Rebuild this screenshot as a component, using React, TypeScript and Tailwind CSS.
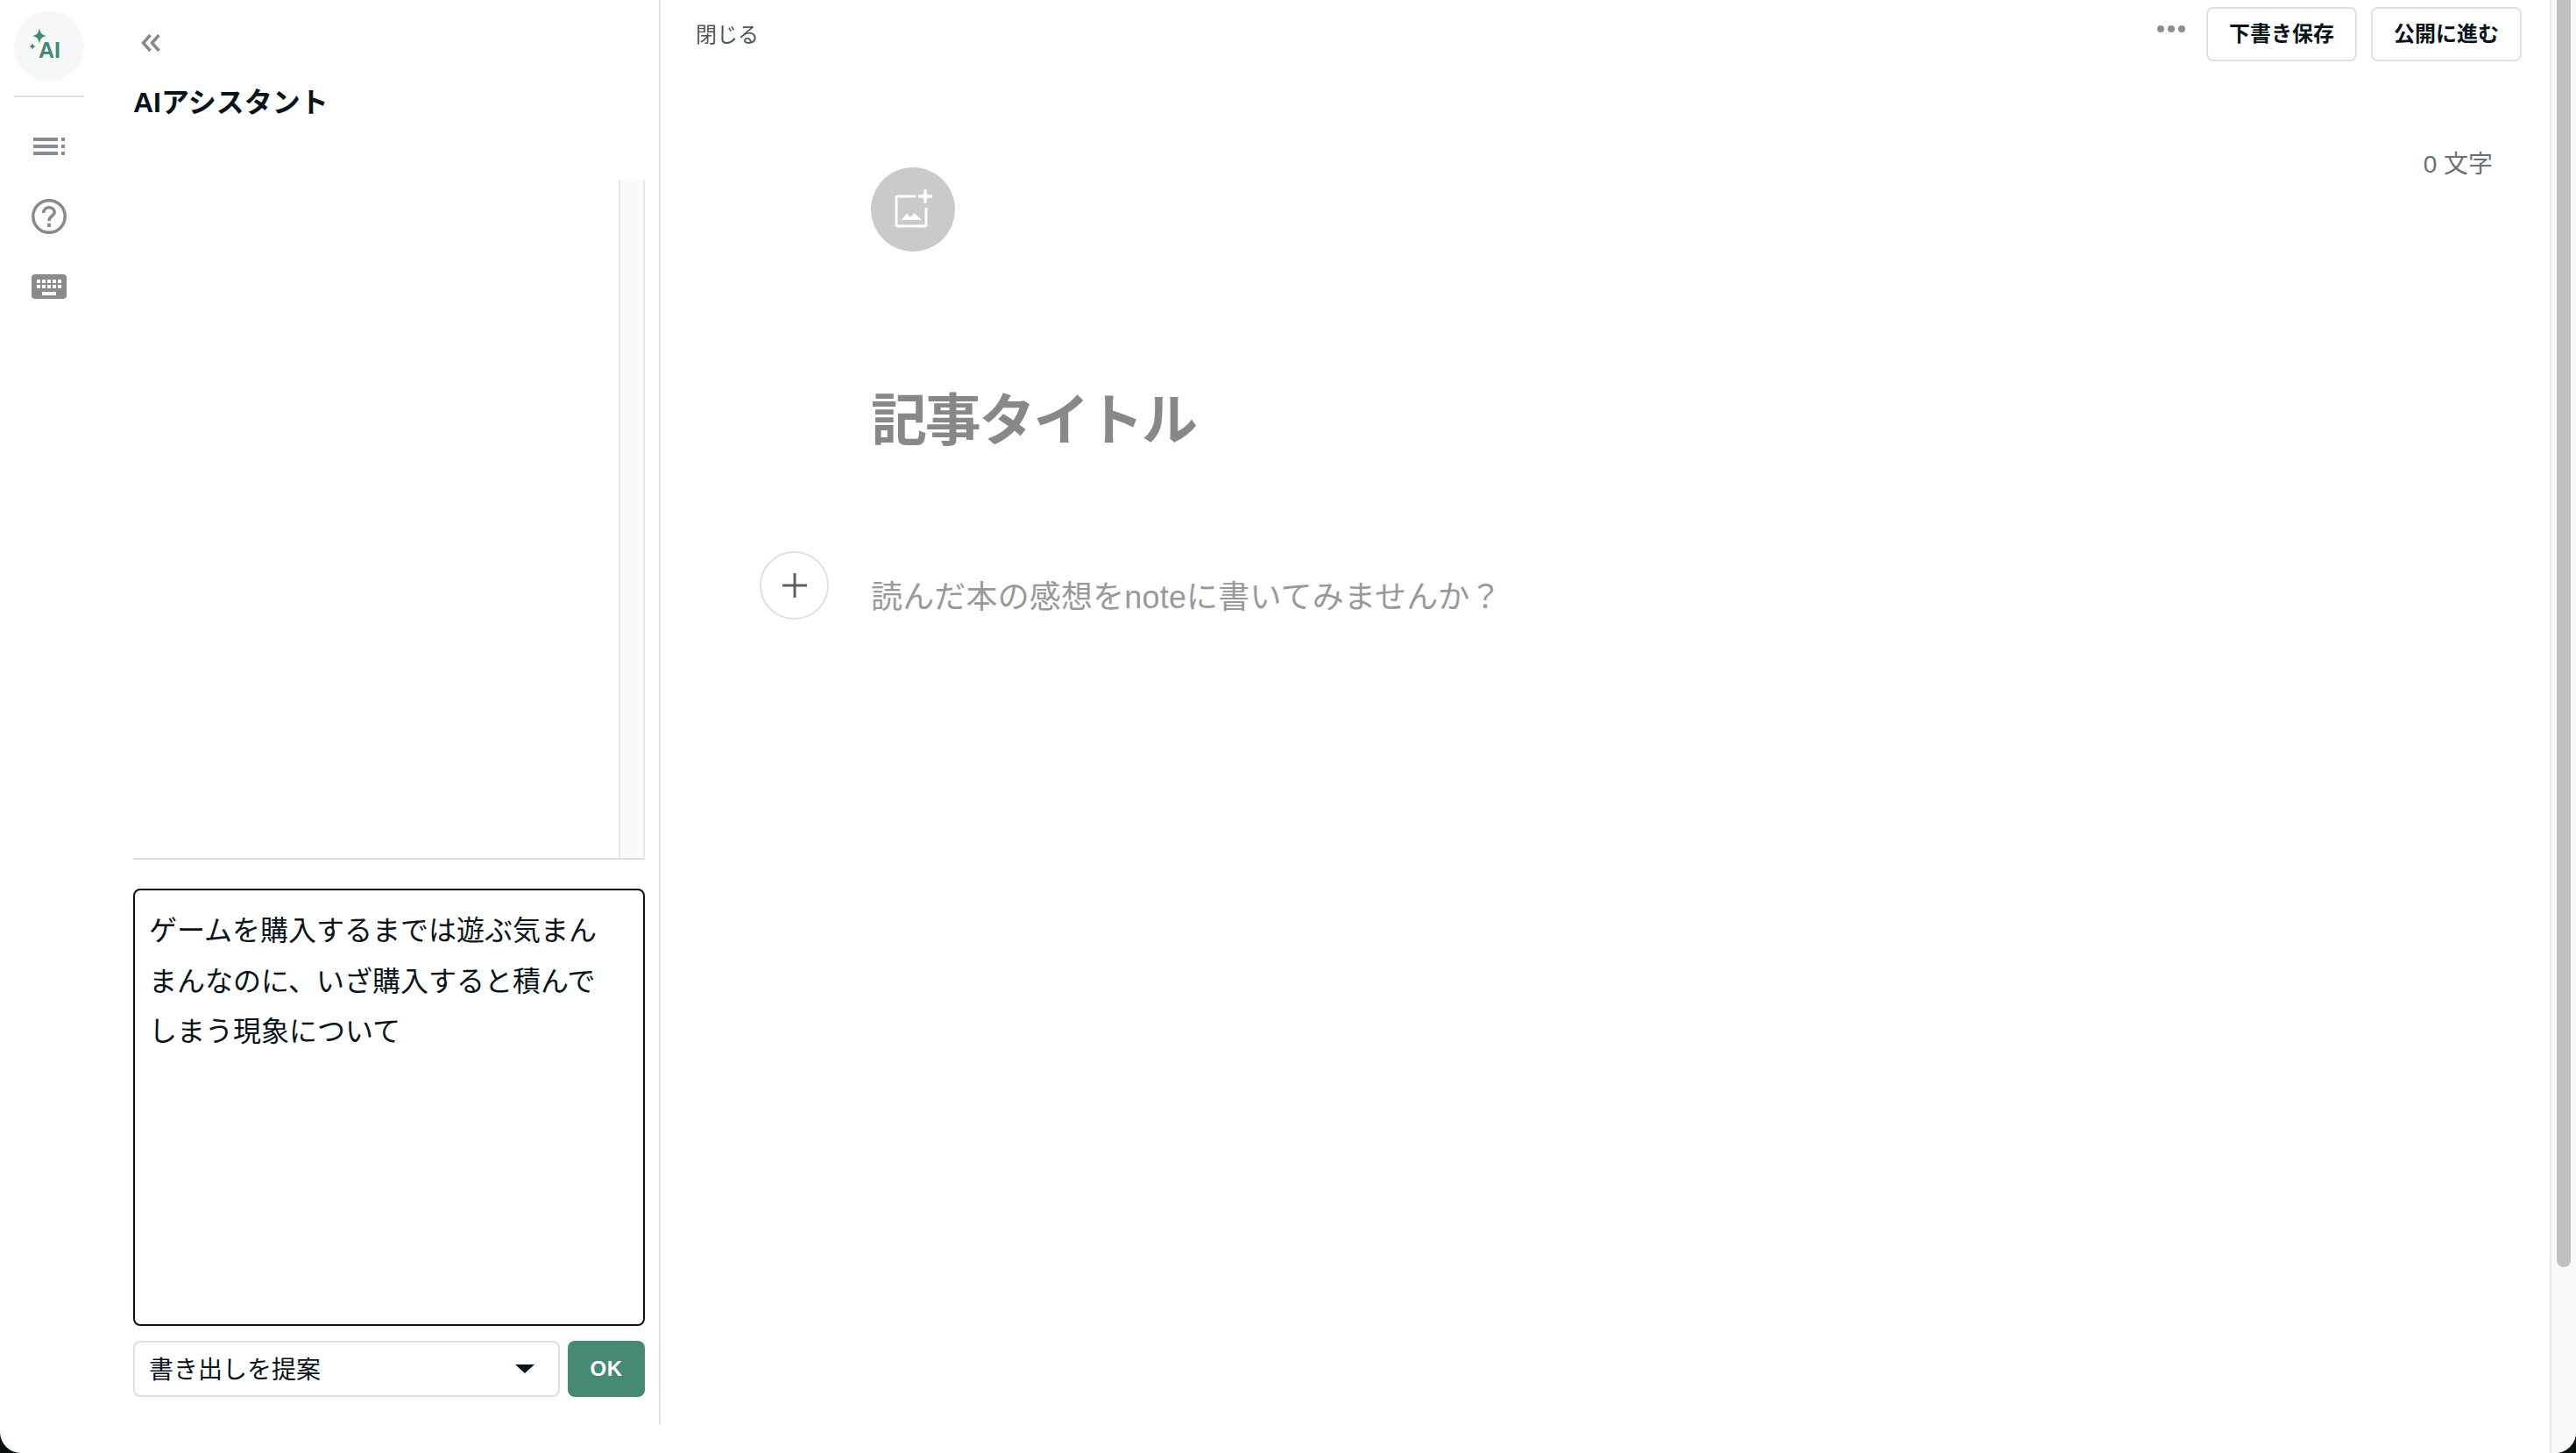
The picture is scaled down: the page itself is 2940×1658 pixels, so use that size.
const font = '[font-family:"Liberation_Sans","Noto_Sans_CJK_JP",sans-serif]';

function Stars() {
  return (
    <svg width="80" height="80" viewBox="0 0 80 80" className="absolute left-0 top-0">
      <path d="M29 19 C30 25 32 27 37 28 C32 29 30 31 29 37 C28 31 26 29 21 28 C26 27 28 25 29 19Z" fill="#3f8a70" />
      <path d="M21 36 C21.500 38.500 22.500 39.500 25 40 C22.500 40.500 21.500 41.500 21 44 C20.500 41.500 19.500 40.500 17 40 C19.500 39.500 20.500 38.500 21 36Z" fill="#3f8a70" />
    </svg>
  );
}

function ListIcon() {
  return (
    <svg width="36" height="20" viewBox="0 0 36 20" fill="#888b8e">
      <rect x="0" y="0" width="28" height="4" />
      <rect x="0" y="8" width="28" height="4" />
      <rect x="0" y="16" width="28" height="4" />
      <rect x="32" y="0" width="4" height="4" />
      <rect x="32" y="8" width="4" height="4" />
      <rect x="32" y="16" width="4" height="4" />
    </svg>
  );
}

function HelpIcon() {
  return (
    <svg width="40" height="40" viewBox="0 0 40 40" fill="none" stroke="#888b8e">
      <circle cx="20" cy="20" r="18.250" strokeWidth="3.500" />
      <path d="M13.800 16 C13.800 12 16.500 9.800 20 9.800 C23.500 9.800 26.200 12 26.200 15.200 C26.200 19.500 20 19.500 20 25" strokeWidth="3.600" />
      <rect x="18" y="28" width="4" height="4" fill="#888b8e" stroke="none" />
    </svg>
  );
}

function KeyboardIcon() {
  const keys = [0, 1, 2, 3, 4];
  return (
    <svg width="40" height="28" viewBox="0 0 40 28">
      <rect width="40" height="28" rx="4" fill="#888b8e" />
      {keys.map((k) => (
        <rect key={`a${k}`} x={6 + k * 6} y="6" width="4" height="4" fill="#fff" />
      ))}
      {keys.map((k) => (
        <rect key={`b${k}`} x={6 + k * 6} y="12" width="4" height="4" fill="#fff" />
      ))}
      <rect x="12" y="20" width="16" height="4" fill="#fff" />
    </svg>
  );
}

function ChevronsIcon() {
  return (
    <svg width="22" height="20" viewBox="0 0 22 20" fill="none" stroke="#85888c" strokeWidth="3.500">
      <path d="M10.500 1 L2.500 10 L10.500 19" />
      <path d="M20.500 1 L12.500 10 L20.500 19" />
    </svg>
  );
}

function AddImageIcon() {
  return (
    <svg width="96" height="96" viewBox="0 0 96 96" fill="none" stroke="#fff" strokeWidth="3">
      <path d="M51 33 H30.500 A1.500 1.500 0 0 0 29 34.500 V65.500 A1.500 1.500 0 0 0 30.500 67 H61.500 A1.500 1.500 0 0 0 63 65.500 V46" />
      <path d="M62 25 V41 M54 33 H70" strokeWidth="3.400" />
      <path d="M35 60 L41 52.500 L45 57 L49.500 52 L58 60 Z" fill="#fff" stroke="none" />
    </svg>
  );
}

function Rail() {
  return (
    <div className="flex w-[112px] shrink-0 flex-col items-center pt-[13px]">
      <div className="relative h-20 w-20 rounded-full bg-[#f5f7f8]">
        <Stars />
        <span className="absolute left-[28px] top-[27px] text-[25px] leading-[34px] font-bold text-[#3f8a70]">AI</span>
      </div>
      <div className="mt-[16px] h-[2px] w-20 bg-[#e0e0e0]" />
      <div className="mt-[46px]"><ListIcon /></div>
      <div className="mt-[50px]"><HelpIcon /></div>
      <div className="mt-[46px]"><KeyboardIcon /></div>
    </div>
  );
}

function Assistant() {
  return (
    <aside className="flex h-[1625px] w-[642px] shrink-0 flex-col border-r-2 border-[#e0e0e0] pl-[40px] pr-[16px]">
      <div className="ml-[9px] mt-[39px] h-5"><ChevronsIcon /></div>
      <h2 className="mt-[38px] text-[32px] leading-[40px] font-bold text-[#08131a]">AIアシスタント</h2>
      <div className="mt-[68px] flex h-[776px] justify-end border-b-2 border-[#e0e0e0]">
        <div className="w-[30px] border-x-2 border-[#e8e8e8] bg-[#fafafa]" />
      </div>
      <div className="mt-[33px] h-[499px] rounded-lg border-2 border-[#08131a] px-[16px] pt-[18px] text-[32px] leading-[57.600px] text-[#08131a]">
        <div>ゲームを購入するまでは遊ぶ気まん</div>
        <div>まんなのに、いざ購入すると積んで</div>
        <div>しまう現象について</div>
      </div>
      <div className="mt-[17px] flex h-16 gap-[9px]">
        <div className="flex flex-1 items-center justify-between rounded-lg border-2 border-[#e0e0e0] pl-[16px] pr-[27px] text-[28px] text-[#08131a]">
          <span className="mt-[3px]">書き出しを提案</span>
          <svg width="22" height="10" viewBox="0 0 22 10"><path d="M0 0 H22 L11 10 Z" fill="#08131a" /></svg>
        </div>
        <button className="flex w-[88px] items-center justify-center rounded-lg bg-[#478a74] text-[24px] font-bold tracking-wide text-white">OK</button>
      </div>
    </aside>
  );
}

function Editor() {
  return (
    <main className="flex min-w-0 flex-1 flex-col">
      <header className="flex h-[78px] shrink-0 items-start justify-between pl-[40px] pr-[32px] pt-2">
        <button className="mt-[14px] text-[24px] leading-[36px] text-[#4f5659]">閉じる</button>
        <div className="flex items-start">
          <div className="mr-[24px] mt-[21px] flex gap-[4px]">
            <span className="h-2 w-2 rounded-full bg-[#8b9093]" />
            <span className="h-2 w-2 rounded-full bg-[#8b9093]" />
            <span className="h-2 w-2 rounded-full bg-[#8b9093]" />
          </div>
          <button className="h-[62px] w-[172px] rounded-lg border-2 border-[#e0e0e0] text-[24px] font-bold text-[#08131a]">下書き保存</button>
          <button className="ml-[16px] h-[62px] w-[172px] rounded-lg border-2 border-[#e0e0e0] text-[24px] font-bold text-[#08131a]">公開に進む</button>
        </div>
      </header>
      <div className="mt-[90px] flex items-start justify-between pl-[240px] pr-[65px]">
        <div className="mt-[23px] h-24 w-24 rounded-full bg-[#c8cacc]"><AddImageIcon /></div>
        <span className="mt-[1px] text-[28px] leading-[38px] text-[#6c7073]">0 文字</span>
      </div>
      <h1 className="ml-[240px] mt-[153px] text-[64px] leading-[80px] font-bold tracking-[-2.200px] text-[#888888]">記事タイトル</h1>
      <div className="ml-[113px] mt-[109px] flex items-start">
        <button className="flex h-[78px] w-[79px] items-center justify-center rounded-full border-2 border-[#e0e0e0]">
          <svg width="28" height="28" viewBox="0 0 28 28" stroke="#5c6064" strokeWidth="3"><path d="M14 0 V28 M0 14 H28" /></svg>
        </button>
        <p className="ml-[48px] mt-[26px] text-[36px] leading-[54px] tracking-[0.170px] text-[#999999]">読んだ本の感想をnoteに書いてみませんか？</p>
      </div>
    </main>
  );
}

export default function App() {
  return (
    <div className={`h-[1658px] w-[2940px] bg-[#08130f] ${font}`}>
      <div className="flex h-full overflow-hidden rounded-b-[24px] bg-white">
        <Rail />
        <Assistant />
        <Editor />
        <div className="w-[30px] shrink-0 border-l-2 border-[#e8e8e8] bg-[#fafafa] pl-[6px] pr-[6px]">
          <div className="h-[1446px] rounded-b-full bg-[#c0c0c0]" />
        </div>
      </div>
    </div>
  );
}
